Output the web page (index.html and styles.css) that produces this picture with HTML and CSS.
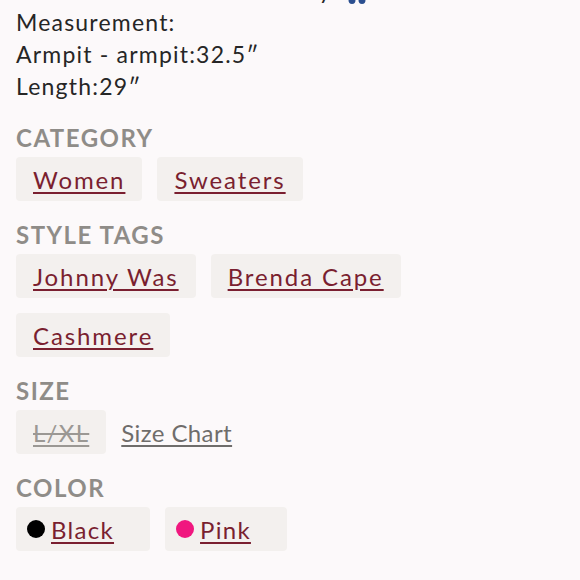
FILE: index.html
```html
<!DOCTYPE html>
<html>
<head>
<meta charset="utf-8">
<link rel="stylesheet" href="styles.css">
</head>
<body>
<div class="page">
  <p class="desc"><span class="lead">Beautiful knit and oh so cozy</span> <svg class="emo" width="24" height="22" viewBox="0 0 24 22"><ellipse cx="7" cy="17" rx="3.5" ry="4" fill="#2b4f8f"/><ellipse cx="17" cy="17" rx="3.5" ry="4" fill="#2b4f8f"/></svg><br>Measurement:<br>Armpit - armpit:32.5″<br>Length:29″</p>

  <section class="group first">
    <h3 class="label">CATEGORY</h3>
    <div class="chips">
      <span class="chip"><a class="link" href="#">Women</a></span>
      <span class="chip"><a class="link" href="#">Sweaters</a></span>
    </div>
  </section>

  <section class="group">
    <h3 class="label">STYLE TAGS</h3>
    <div class="chips">
      <span class="chip"><a class="link" href="#">Johnny Was</a></span>
      <span class="chip"><a class="link" href="#">Brenda Cape</a></span>
      <span class="chip"><a class="link" href="#">Cashmere</a></span>
    </div>
  </section>

  <section class="group">
    <h3 class="label">SIZE</h3>
    <div class="chips size-row">
      <span class="chip"><span class="sold">L/XL</span></span>
      <a class="size-chart" href="#">Size Chart</a>
    </div>
  </section>

  <section class="group">
    <h3 class="label">COLOR</h3>
    <div class="chips">
      <span class="chip color-chip"><span class="dot dot-black"></span><a class="link" href="#">Black</a></span>
      <span class="chip color-chip"><span class="dot dot-pink"></span><a class="link" href="#">Pink</a></span>
    </div>
  </section>
</div>
</body>
</html>
```

FILE: styles.css
```css
html, body {
  margin: 0;
  padding: 0;
  background: #fcf9fa;
}
body {
  font-family: "Lato", "Noto Sans", sans-serif;
  color: #2a2a2a;
  font-size: 23px;
}
.page {
  padding: 0 16px;
  margin-top: -26px;
}
.desc {
  margin: 0 0 2px 0;
  line-height: 32px;
  letter-spacing: 1.2px;
  color: #262626;
}
.lead {
  letter-spacing: 0.85px;
}
.emo {
  vertical-align: -6px;
  margin-left: 6px;
}
.group {
  margin-top: 20px;
}
.group.first {
  margin-top: 22px;
}
.label {
  margin: 0 0 5px 0;
  font-size: 24px;
  line-height: 28px;
  font-weight: 700;
  letter-spacing: 1.5px;
  color: #8f8c88;
}
.chips {
  display: flex;
  flex-wrap: wrap;
  gap: 15px 15px;
  align-items: center;
  font-size: 24px;
  letter-spacing: 1.9px;
}
.chip {
  display: inline-flex;
  align-items: center;
  height: 44px;
  padding: 0 17px;
  background: #f3f0ee;
  border-radius: 4px;
}
.link {
  color: #7a1f30;
  text-decoration: underline;
  text-decoration-thickness: 1.5px;
  text-underline-offset: 3px;
}
.sold {
  color: #9b9894;
  letter-spacing: 1.3px;
  text-decoration: line-through underline;
  text-decoration-thickness: 1.5px;
  text-underline-offset: 3px;
}
.size-chart {
  color: #6f6d6b;
  letter-spacing: 0.4px;
  text-decoration: underline;
  text-decoration-thickness: 1.5px;
  text-underline-offset: 3px;
}
.color-chip {
  padding: 0 36px 0 11px;
  letter-spacing: 1.3px;
}
.dot {
  width: 18px;
  height: 18px;
  border-radius: 50%;
  margin-right: 6px;
  flex: none;
}
.dot-black { background: #000; }
.dot-pink { background: #f0177f; }
```
